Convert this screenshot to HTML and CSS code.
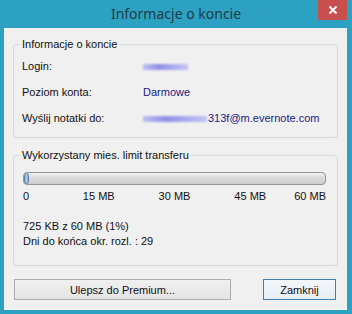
FILE: index.html
```html
<!DOCTYPE html>
<html>

<head>
    <meta name="viewport" content="width=device-width, initial-scale=1">
    <link rel="icon" href="data:,">
    <link rel="stylesheet" href="styles.css">
</head>

<body>
    <div class="window">
        <!-- Barra de titulo -->
        <div class="titlebar">
            <span class="title">Informacje o koncie</span>
            <button class="close" title="Zamknij">
                <svg width="10" height="10" viewBox="0 0 10 10">
                    <path d="M1.5 1.5 L8.5 8.5 M8.5 1.5 L1.5 8.5" stroke="#fff" stroke-width="1.8" fill="none"/>
                </svg>
            </button>
        </div>

        <div class="client">
            <fieldset class="group">
                <legend>Informacje o koncie</legend>
                <div class="info">
                    <span>Login:</span>
                    <span class="value"><span class="blur blur-login"></span></span>
                    <span>Poziom konta:</span>
                    <span class="value">Darmowe</span>
                    <span>Wyślij notatki do:</span>
                    <span class="value"><span class="blur blur-mail"></span>313f@m.evernote.com</span>
                </div>
            </fieldset>

            <fieldset class="group group-transfer">
                <legend>Wykorzystany mies. limit transferu</legend>
                <div class="progress">
                    <div class="progress-fill" style="width: 5px"></div>
                </div>
                <div class="ticks">
                    <span class="tick tick-first">0</span>
                    <span class="tick">15 MB</span>
                    <span class="tick">30 MB</span>
                    <span class="tick">45 MB</span>
                    <span class="tick tick-last">60 MB</span>
                </div>
                <div class="usage">
                    <div>725 KB z 60 MB (1%)</div>
                    <div>Dni do końca okr. rozl. : 29</div>
                </div>
            </fieldset>

            <div class="buttons">
                <button class="btn btn-wide">Ulepsz do Premium...</button>
                <button class="btn btn-default">Zamknij</button>
            </div>
        </div>
    </div>
</body>

</html>
```

FILE: styles.css
```css
/* Ventana de dialogo estilo Windows 8 */
body {
    margin: 0;
    font-family: "Liberation Sans", Arial, sans-serif;
    font-size: 11px;
    color: #111;
}

.window {
    width: 352px;
    height: 314px;
    background-color: #2ca1c1;
    display: flex;
    flex-direction: column;
}

.titlebar {
    height: 28px;
    display: grid;
    grid-template-columns: 1fr auto 1fr;
}

.title {
    grid-column: 2;
    font-family: "Noto Sans", sans-serif;
    font-size: 14px;
    line-height: 28px;
    color: #1d3d48;
}

.close {
    grid-column: 3;
    justify-self: end;
    width: 29px;
    height: 20px;
    margin-right: 5px;
    padding: 0;
    border: none;
    background-color: #c7504f;
    display: flex;
    align-items: center;
    justify-content: center;
}

.client {
    flex: 1;
    margin: 0 5px 4px 4px;
    padding: 10px 9px 0 9px;
    background-color: #f0f0f0;
}

.group {
    margin: 0;
    padding: 9px 8px 12px 8px;
    border: 1px solid #d5dadf;
    border-radius: 3px;
}

.group legend {
    padding: 0 2px;
    margin-left: -2px;
    line-height: 13px;
}

.info {
    display: grid;
    grid-template-columns: 120px 1fr;
    row-gap: 13px;
    line-height: 13px;
}

.value {
    color: #1a1a86;
    display: flex;
    align-items: center;
    padding-left: 1px;
}

.blur {
    display: inline-block;
    background: linear-gradient(90deg, #c0c0f2, #8f8fe6 35%, #a9a9ee 65%, #c4c4f4);
    filter: blur(1px);
}

.blur-login {
    width: 45px;
    height: 6px;
}

.blur-mail {
    width: 64px;
    height: 6px;
    margin-right: 1px;
}

.group-transfer {
    margin-top: 11px;
    padding: 10px 11px 16px 9px;
}

.group-transfer legend {
    margin-left: -3px;
}

.progress {
    height: 13px;
    box-sizing: border-box;
    border: 1px solid #959595;
    border-radius: 4px;
    background: linear-gradient(to bottom, #f2f2f2 0%, #dcdcdc 40%, #cdcdcd 100%);
    overflow: hidden;
}

.progress-fill {
    height: 100%;
    box-sizing: border-box;
    border: 1px solid #5d7ea4;
    border-radius: 3px;
    background: linear-gradient(to right, #8fa9c9, #b9cde2 50%, #7f9bbf);
}

.ticks {
    display: flex;
    justify-content: space-between;
    margin-top: 5px;
    line-height: 13px;
}

.tick {
    width: 0;
    display: flex;
    justify-content: center;
    white-space: nowrap;
}

.tick-first {
    justify-content: flex-start;
}

.tick-last {
    justify-content: flex-end;
}

.usage {
    margin-top: 16px;
    line-height: 15px;
}

.buttons {
    display: flex;
    justify-content: space-between;
    margin: 13px 2px 0 1px;
}

.btn {
    height: 21px;
    padding: 0;
    font-family: "Liberation Sans", Arial, sans-serif;
    font-size: 11px;
    color: #111;
    border: 1px solid #adadad;
    background: linear-gradient(to bottom, #f0f0f0, #e5e5e5);
}

.btn-wide {
    width: 217px;
}

.btn-default {
    width: 73px;
    border-color: #3c7fb1;
    background: linear-gradient(to bottom, #f3f7fb, #e6eef6);
}
```
